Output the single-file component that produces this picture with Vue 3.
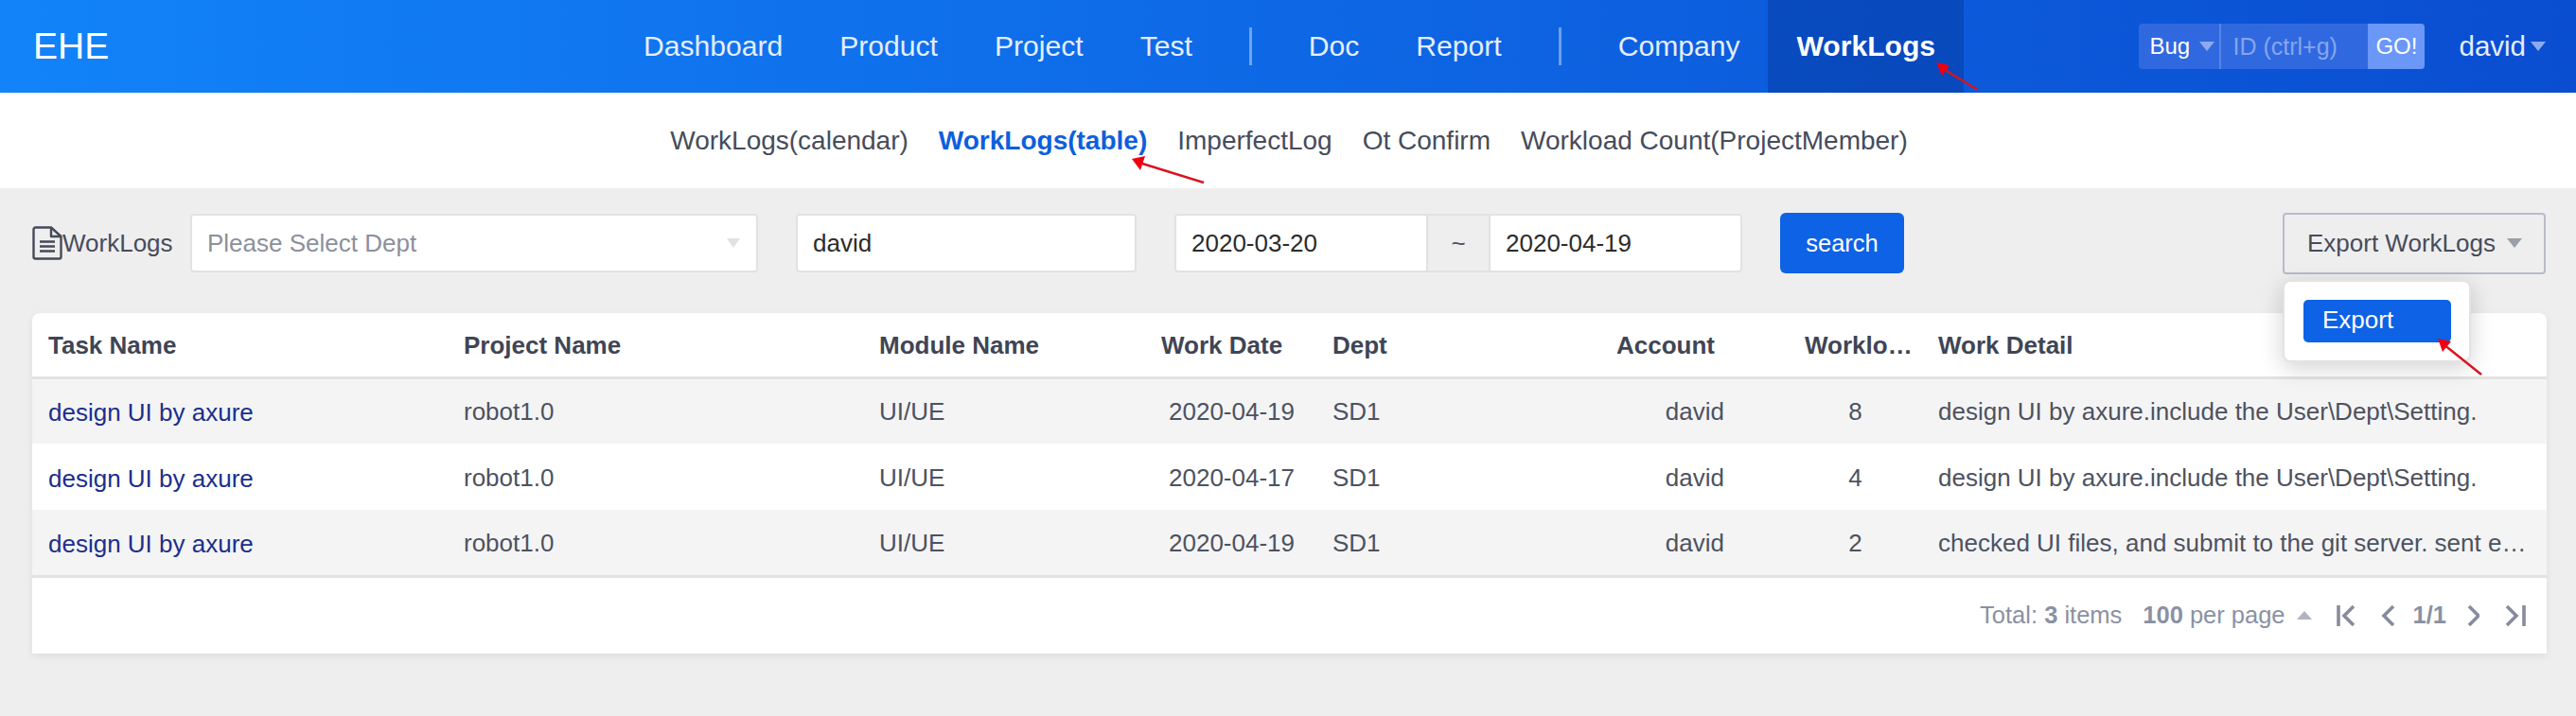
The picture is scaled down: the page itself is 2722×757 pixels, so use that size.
<template>
  <div class="page">
    <header class="topbar">
      <div class="logo">EHE</div>
      <nav class="mainnav">
        <template v-for="item in mainNav" :key="item.label">
          <span v-if="item.sep" class="nav-sep"></span>
          <a class="nav-item" :class="{ active: item.active }">{{ item.label }}</a>
        </template>
      </nav>
      <div class="quick">
        <span class="quick-type">Bug<i class="caret caret-light"></i></span>
        <input v-model="quickId" class="quick-id" placeholder="ID (ctrl+g)" />
        <button class="quick-go">GO!</button>
      </div>
      <div class="user">david<i class="caret caret-user"></i></div>
    </header>

    <nav class="subnav">
      <a v-for="item in subNav" :key="item.label" class="sub-item" :class="{ active: item.active }">{{ item.label }}</a>
    </nav>

    <section class="toolbar">
      <div class="title">
        <svg class="doc-icon" width="32" height="36" viewBox="0 0 32 36" fill="none" stroke="#464a58" stroke-width="2.4">
          <path d="M20 1.5H3.5a2 2 0 0 0-2 2v29a2 2 0 0 0 2 2h25a2 2 0 0 0 2-2V11z" stroke-linejoin="round" />
          <path d="M20 1.5V11h10.5" stroke-linejoin="round" />
          <path d="M8 16.5h16M8 21.5h16M8 26.5h16" stroke-width="2.6" />
        </svg>
        <span>WorkLogs</span>
      </div>
      <div class="dept-select">
        <span>Please Select Dept</span>
        <i class="caret caret-pale"></i>
      </div>
      <input v-model="account" class="field account" />
      <div class="range">
        <input v-model="dateFrom" class="date" />
        <span class="tilde">~</span>
        <input v-model="dateTo" class="date" />
      </div>
      <button class="search-btn">search</button>
      <div class="export">
        <button class="export-btn">Export WorkLogs<i class="caret caret-grey"></i></button>
        <div class="export-menu">
          <a class="export-item">Export</a>
        </div>
      </div>
    </section>

    <section class="card">
      <table class="grid">
        <colgroup>
          <col style="width: 439px" />
          <col style="width: 439px" />
          <col style="width: 298px" />
          <col style="width: 181px" />
          <col style="width: 300px" />
          <col style="width: 199px" />
          <col style="width: 141px" />
          <col />
        </colgroup>
        <thead>
          <tr>
            <th>Task Name</th>
            <th>Project Name</th>
            <th>Module Name</th>
            <th>Work Date</th>
            <th>Dept</th>
            <th>Account</th>
            <th class="clip head-hours">Worklogs</th>
            <th>Work Detail</th>
          </tr>
        </thead>
        <tbody>
          <tr v-for="row in rows" :key="row.id">
            <td><a class="task">{{ row.task }}</a></td>
            <td>{{ row.project }}</td>
            <td>{{ row.module }}</td>
            <td class="r-date">{{ row.date }}</td>
            <td>{{ row.dept }}</td>
            <td class="r-account">{{ row.account }}</td>
            <td class="r-hours">{{ row.hours }}</td>
            <td class="clip">{{ row.detail }}</td>
          </tr>
        </tbody>
      </table>
      <footer class="pager">
        <span class="total">Total: <b>3</b> items</span>
        <span class="per-page"><b>100</b> per page<i class="caret caret-up"></i></span>
        <svg class="pg first" width="20" height="28" viewBox="0 0 20 28"><path d="M2 3v22M18 4L8 14l10 10" /></svg>
        <svg class="pg prev" width="15" height="28" viewBox="0 0 15 28"><path d="M13 4L3 14l10 10" /></svg>
        <b class="page-no">1/1</b>
        <svg class="pg next" width="13" height="28" viewBox="0 0 13 28"><path d="M2 4l10 10L2 24" /></svg>
        <svg class="pg last" width="22" height="28" viewBox="0 0 22 28"><path d="M2 4l10 10L2 24M20 3v22" /></svg>
      </footer>
    </section>

    <svg class="marks" width="2722" height="757" viewBox="0 0 2722 757">
      <g v-for="a in arrows" :key="a.id">
        <line :x1="a.x1" :y1="a.y1" :x2="a.x2" :y2="a.y2" stroke="#d8131f" stroke-width="2.5" />
        <polygon :points="a.head" fill="#f00010" />
      </g>
    </svg>
  </div>
</template>

<script setup>
import { ref } from 'vue'

const quickId = ref('')
const account = ref('david')
const dateFrom = ref('2020-03-20')
const dateTo = ref('2020-04-19')

const mainNav = [
  { label: 'Dashboard' },
  { label: 'Product' },
  { label: 'Project' },
  { label: 'Test' },
  { label: 'Doc', sep: true },
  { label: 'Report' },
  { label: 'Company', sep: true },
  { label: 'WorkLogs', active: true }
]

const subNav = [
  { label: 'WorkLogs(calendar)' },
  { label: 'WorkLogs(table)', active: true },
  { label: 'ImperfectLog' },
  { label: 'Ot Confirm' },
  { label: 'Workload Count(ProjectMember)' }
]

const detail = 'design UI by axure.include the User\\Dept\\Setting.'
const rows = [
  { id: 1, task: 'design UI by axure', project: 'robot1.0', module: 'UI/UE', date: '2020-04-19', dept: 'SD1', account: 'david', hours: 8, detail },
  { id: 2, task: 'design UI by axure', project: 'robot1.0', module: 'UI/UE', date: '2020-04-17', dept: 'SD1', account: 'david', hours: 4, detail },
  { id: 3, task: 'design UI by axure', project: 'robot1.0', module: 'UI/UE', date: '2020-04-19', dept: 'SD1', account: 'david', hours: 2, detail: 'checked UI files, and submit to the git server. sent email to the team and waiting for review.' }
]

const arrows = [
  { id: 'nav', x1: 2090, y1: 95, x2: 2052, y2: 72, head: '2046,66 2060,69 2052,80' },
  { id: 'tab', x1: 1272, y1: 193, x2: 1204, y2: 172, head: '1196,168 1210,165 1205,180' },
  { id: 'exp', x1: 2622, y1: 396, x2: 2582, y2: 364, head: '2576,358 2590,361 2581,372' }
]
</script>

<style>
html,
body {
  margin: 0;
  background: #eee;
}
</style>

<style scoped>
.page {
  position: relative;
  width: 2722px;
  height: 757px;
  overflow: hidden;
  background: #eee;
  font-family: "Liberation Sans", Arial, sans-serif;
  font-size: 26px;
  color: #464c5b;
}

.topbar {
  display: flex;
  align-items: center;
  height: 98px;
  padding: 0 32px 0 35px;
  box-sizing: border-box;
  background: linear-gradient(90deg, #1283f9 0%, #0a4dd1 100%);
  color: #fff;
}
.logo {
  width: 615px;
  font-size: 39px;
}
.mainnav {
  display: flex;
  align-items: center;
  height: 100%;
}
.nav-item {
  display: flex;
  align-items: center;
  height: 100%;
  padding: 0 30px;
  font-size: 30.1px;
  color: #e4eeff;
}
.nav-item.active {
  font-weight: 700;
  color: #fff;
  background: rgba(0, 30, 110, 0.28);
}
.nav-sep {
  width: 3px;
  height: 40px;
  margin: 0 30px;
  background: rgba(255, 255, 255, 0.4);
}
.quick {
  display: flex;
  align-items: stretch;
  height: 48px;
  margin-left: auto;
  border-radius: 4px;
  background: #3069df;
  overflow: hidden;
}
.quick-type {
  display: flex;
  align-items: center;
  width: 87px;
  padding-left: 11px;
  box-sizing: border-box;
  border-right: 2px solid #5585e6;
  font-size: 24px;
}
.quick-id {
  width: 155px;
  padding: 0 12px;
  box-sizing: border-box;
  border: 0;
  outline: 0;
  background: transparent;
  font: 25px "Liberation Sans", Arial, sans-serif;
  color: #fff;
}
.quick-id::placeholder {
  color: #86a6ee;
}
.quick-go {
  width: 60px;
  padding: 0;
  border: 0;
  background: #6a97f8;
  color: #fff;
  font: 24px "Liberation Sans", Arial, sans-serif;
}
.user {
  display: flex;
  align-items: center;
  margin-left: 36px;
  font-size: 29.5px;
  color: #e4eeff;
}

.caret {
  display: inline-block;
  width: 0;
  height: 0;
  border-left: 8px solid transparent;
  border-right: 8px solid transparent;
  border-top: 10px solid #8fa9ee;
}
.caret-light {
  margin-left: 10px;
}
.caret-user {
  margin-left: 5px;
}
.caret-pale {
  border-left-width: 7px;
  border-right-width: 7px;
  border-top-color: #dfe1e6;
}
.caret-grey {
  margin-left: 12px;
  border-top-color: #9a9ea8;
}
.caret-up {
  margin-left: 5px;
  border-top: 0;
  border-bottom: 9px solid #b0b4be;
}

.subnav {
  display: flex;
  align-items: center;
  justify-content: center;
  gap: 32px;
  height: 101px;
  padding-left: 2px;
  background: #fff;
  font-size: 28px;
  color: #464c5b;
}
.sub-item.active {
  font-weight: 700;
  color: #0d5fdc;
}

.toolbar {
  display: flex;
  align-items: center;
  height: 64px;
  padding: 26px 32px 0 34px;
}
.title {
  display: flex;
  align-items: center;
  width: 167px;
}
.doc-icon {
  flex: none;
}
.dept-select {
  display: flex;
  align-items: center;
  justify-content: space-between;
  width: 600px;
  height: 62px;
  padding: 0 17px 0 16px;
  box-sizing: border-box;
  border: 2px solid #e2e2e2;
  border-radius: 4px;
  background: #fff;
  color: #8b909c;
}
.field,
.date {
  height: 62px;
  box-sizing: border-box;
  outline: 0;
  background: #fff;
  font: 26px "Liberation Sans", Arial, sans-serif;
  color: #2b2b2b;
}
.account {
  width: 360px;
  margin-left: 40px;
  padding: 0 16px;
  border: 2px solid #e2e2e2;
  border-radius: 4px;
}
.range {
  display: flex;
  width: 600px;
  height: 62px;
  margin-left: 40px;
  box-sizing: border-box;
  border: 2px solid #e2e2e2;
  border-radius: 4px;
  overflow: hidden;
}
.date {
  flex: 1;
  min-width: 0;
  height: 58px;
  padding: 0 16px;
  border: 0;
}
.tilde {
  display: flex;
  align-items: center;
  justify-content: center;
  width: 68px;
  box-sizing: border-box;
  border-left: 2px solid #e2e2e2;
  border-right: 2px solid #e2e2e2;
  color: #555;
}
.search-btn {
  width: 131px;
  height: 64px;
  margin-left: 40px;
  border: 0;
  border-radius: 6px;
  background: #0d62e6;
  color: #fff;
  font: 25.5px "Liberation Sans", Arial, sans-serif;
}
.export {
  position: relative;
  margin-left: auto;
}
.export-btn {
  display: flex;
  align-items: center;
  width: 278px;
  height: 65px;
  padding: 0 0 0 24px;
  box-sizing: border-box;
  border: 2px solid #b8bcc8;
  border-radius: 4px;
  background: transparent;
  color: #464c5b;
  font: 26px "Liberation Sans", Arial, sans-serif;
}
.export-menu {
  position: absolute;
  top: 71px;
  left: 0;
  z-index: 2;
  width: 199px;
  height: 87px;
  padding: 19px 19px 19px 20px;
  box-sizing: border-box;
  border: 2px solid #e3e3e3;
  border-radius: 8px;
  background: #fff;
  box-shadow: 0 6px 24px rgba(0, 0, 0, 0.18);
}
.export-item {
  display: flex;
  align-items: center;
  height: 45px;
  padding-bottom: 1px;
  padding-left: 20px;
  box-sizing: border-box;
  border-radius: 5px;
  background: #0d62e6;
  color: #fff;
}

.card {
  width: 2657px;
  margin: 42px 0 0 34px;
  border-radius: 8px 8px 0 0;
  background: #fff;
  box-shadow: 0 3px 8px rgba(0, 0, 0, 0.07);
  overflow: hidden;
}
.grid {
  width: 100%;
  table-layout: fixed;
  border-collapse: collapse;
}
th {
  height: 68px;
  padding: 2px 17px 0;
  box-sizing: border-box;
  border-bottom: 3px solid #e2e2e2;
  text-align: left;
  font-weight: 700;
  color: #3f4555;
}
.head-hours {
  padding-right: 8px;
}
td {
  height: 70px;
  padding: 2px 17px 0;
  box-sizing: border-box;
  color: #4d525f;
}
tbody tr:nth-child(odd) {
  background: #f4f4f5;
}
tbody tr:last-child td {
  border-bottom: 3px solid #e2e2e2;
}
.clip {
  overflow: hidden;
  white-space: nowrap;
  text-overflow: ellipsis;
}
.task {
  position: relative;
  top: 1px;
  color: #1a2f8c;
}
.r-date {
  padding-right: 23px;
  text-align: right;
}
.r-account {
  padding-right: 68px;
  text-align: right;
}
.r-hours {
  text-align: center;
}

.pager {
  display: flex;
  align-items: center;
  justify-content: flex-end;
  height: 80px;
  padding-right: 22px;
  color: #8a91a3;
  font-size: 25.5px;
}
.per-page {
  display: flex;
  align-items: center;
  gap: 7px;
  margin-left: 22px;
}
.pg {
  fill: none;
  stroke: #858c9e;
  stroke-width: 3.6;
}
.first {
  margin-left: 26px;
}
.prev {
  margin-left: 27px;
}
.page-no {
  margin-left: 19px;
}
.next {
  margin-left: 22px;
}
.last {
  margin-left: 27px;
}

.marks {
  position: absolute;
  top: 0;
  left: 0;
  z-index: 3;
  pointer-events: none;
}
</style>
